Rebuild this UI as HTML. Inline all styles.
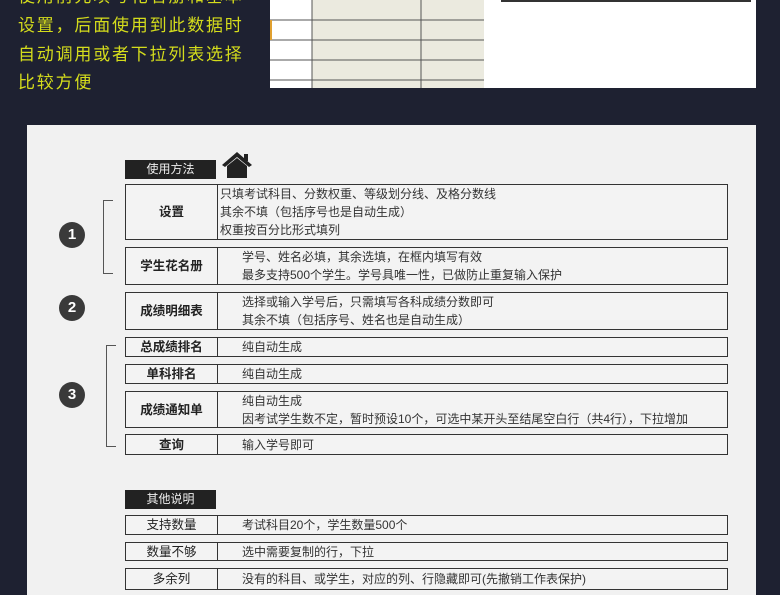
<!DOCTYPE html>
<html><head><meta charset="utf-8"><style>
*{margin:0;padding:0;box-sizing:border-box}
body{width:780px;height:585px;overflow:hidden;background:#1e2131;font-family:"Liberation Sans","Noto Sans CJK SC",sans-serif;position:relative}
.y{position:absolute;left:18px;color:#d4dc1c;font-size:17px;letter-spacing:1.8px;white-space:nowrap;line-height:20px}
.abs{position:absolute}
.panel{position:absolute;left:27px;top:125px;width:729px;height:470px;background:#f1f1f1}
.row{position:absolute;left:125px;width:603px;border:1.5px solid #333;background:#f3f3f3;font-size:12px;color:#333}
.row .l{position:absolute;left:0;top:0;bottom:0;width:92px;border-right:1.5px solid #333;display:flex;align-items:center;justify-content:center;font-weight:bold;font-size:12.5px;color:#222;line-height:14px}
.row .l.n{font-weight:normal}
.row .c{position:absolute;left:116px;top:0;bottom:0;display:flex;flex-direction:column;justify-content:center;line-height:18px;white-space:nowrap}
.tag{position:absolute;left:125px;width:91px;height:19px;background:#222;color:#eee;font-size:12px;text-align:center;line-height:19px}
.circ{position:absolute;width:26px;height:26px;border-radius:50%;background:#3a3a3a;color:#fff;font-weight:bold;font-size:15px;text-align:center;line-height:26px}
.br{position:absolute;border:1.5px solid #555;border-right:none;width:10px}
</style></head><body>
<div class="y" style="top:-13px">使用前先填写花名册和基本</div>
<div class="y" style="top:16px">设置，后面使用到此数据时</div>
<div class="y" style="top:45px">自动调用或者下拉列表选择</div>
<div class="y" style="top:73px">比较方便</div>
<div class="abs" style="left:270px;top:0;width:214px;height:88px;background:#fff"></div>
<div class="abs" style="left:312px;top:0;width:172px;height:88px;background:#ebeadf"></div>
<svg class="abs" style="left:270px;top:0" width="214" height="88">
<g stroke="#555" stroke-width="1"><line x1="42" y1="0" x2="42" y2="88"/><line x1="151" y1="0" x2="151" y2="88"/>
<line x1="0" y1="20" x2="214" y2="20"/><line x1="0" y1="40" x2="214" y2="40"/><line x1="0" y1="60" x2="214" y2="60"/><line x1="0" y1="80" x2="214" y2="80"/></g>
<line x1="1" y1="20" x2="1" y2="40" stroke="#e0a030" stroke-width="2"/></svg>
<div class="abs" style="left:484px;top:0;width:272px;height:88px;background:#fff"></div>
<div class="abs" style="left:501px;top:0;width:250px;height:1.5px;background:#333"></div>
<div class="panel"></div>
<div class="tag" style="top:160px">使用方法</div>
<svg class="abs" style="left:221px;top:151px" width="32" height="28" viewBox="0 0 32 28"><path d="M16 1 L1 14 L4 16 L16 6 L28 16 L31 14 Z" fill="#222"/><path d="M6 15 L16 7 L26 15 V27 H6Z" fill="#222"/><rect x="23" y="3" width="4" height="7" fill="#222"/></svg>
<div class="circ" style="left:59px;top:222px">1</div>
<div class="circ" style="left:59px;top:295px">2</div>
<div class="circ" style="left:59px;top:382px">3</div>
<div class="br" style="left:103px;top:200px;height:74px"></div>
<div class="br" style="left:106px;top:345px;height:102px"></div>
<div class="row" style="top:184px;height:56px"><div class="l">设置</div><div class="c" style="left:94px">只填考试科目、分数权重、等级划分线、及格分数线<br>其余不填（包括序号也是自动生成）<br>权重按百分比形式填列</div></div>
<div class="row" style="top:247px;height:38px"><div class="l">学生花名册</div><div class="c">学号、姓名必填，其余选填，在框内填写有效<br>最多支持500个学生。学号具唯一性，已做防止重复输入保护</div></div>
<div class="row" style="top:292px;height:38px"><div class="l">成绩明细表</div><div class="c">选择或输入学号后，只需填写各科成绩分数即可<br>其余不填（包括序号、姓名也是自动生成）</div></div>
<div class="row" style="top:337px;height:20px"><div class="l">总成绩排名</div><div class="c">纯自动生成</div></div>
<div class="row" style="top:364px;height:20px"><div class="l">单科排名</div><div class="c">纯自动生成</div></div>
<div class="row" style="top:391px;height:37px"><div class="l">成绩通知单</div><div class="c">纯自动生成<br>因考试学生数不定，暂时预设10个，可选中某开头至结尾空白行（共4行），下拉增加</div></div>
<div class="row" style="top:434px;height:21px"><div class="l">查询</div><div class="c">输入学号即可</div></div>
<div class="tag" style="top:490px">其他说明</div>
<div class="row" style="top:515px;height:20px"><div class="l n">支持数量</div><div class="c">考试科目20个，学生数量500个</div></div>
<div class="row" style="top:542px;height:19px"><div class="l n">数量不够</div><div class="c">选中需要复制的行，下拉</div></div>
<div class="row" style="top:568px;height:22px"><div class="l n">多余列</div><div class="c">没有的科目、或学生，对应的列、行隐藏即可(先撤销工作表保护)</div></div>
</body></html>
